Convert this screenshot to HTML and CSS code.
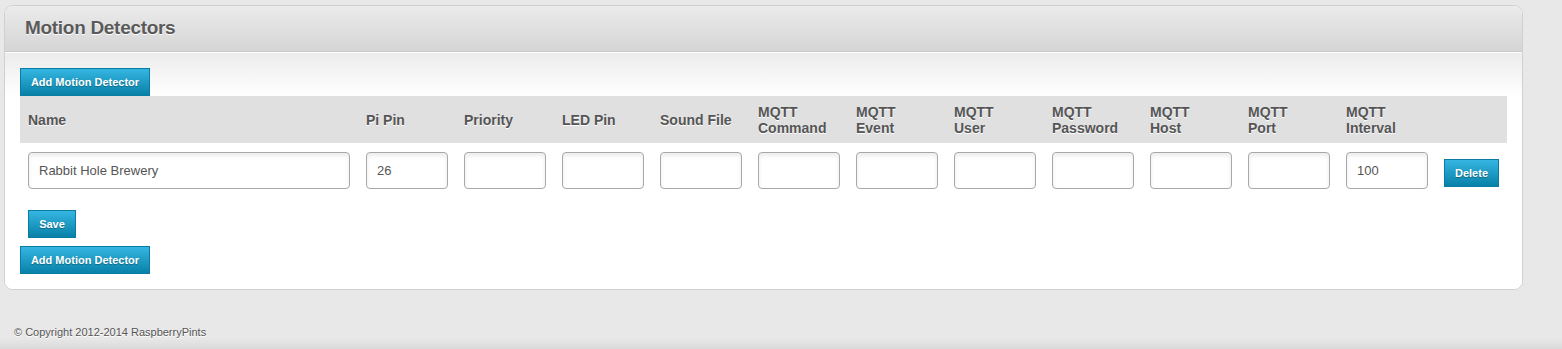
FILE: index.html
```html
<!DOCTYPE html>
<html lang="en">
<head>
    <meta charset="UTF-8">
    <title>Motion Detectors</title>
    <link rel="stylesheet" href="styles.css">
</head>
<body>
    <div class="panel">
        <div class="panel-head">
            <h2>Motion Detectors</h2>
        </div>
        <div class="panel-body">
            <button class="btn btn-add">Add Motion Detector</button>
            <form>
                <table class="grid">
                    <thead>
                        <tr>
                            <th class="col-name">Name</th>
                            <th>Pi Pin</th>
                            <th>Priority</th>
                            <th>LED Pin</th>
                            <th>Sound File</th>
                            <th>MQTT<br>Command</th>
                            <th>MQTT<br>Event</th>
                            <th>MQTT<br>User</th>
                            <th>MQTT<br>Password</th>
                            <th>MQTT<br>Host</th>
                            <th>MQTT<br>Port</th>
                            <th>MQTT<br>Interval</th>
                            <th class="col-del"></th>
                        </tr>
                    </thead>
                    <tbody>
                        <tr>
                            <td class="col-name"><input type="text" class="field field-wide" value="Rabbit Hole Brewery"></td>
                            <td><input type="text" class="field" value="26"></td>
                            <td><input type="text" class="field"></td>
                            <td><input type="text" class="field"></td>
                            <td><input type="text" class="field"></td>
                            <td><input type="text" class="field"></td>
                            <td><input type="text" class="field"></td>
                            <td><input type="text" class="field"></td>
                            <td><input type="text" class="field"></td>
                            <td><input type="text" class="field"></td>
                            <td><input type="text" class="field"></td>
                            <td><input type="text" class="field" value="100"></td>
                            <td class="col-del"><button type="button" class="btn btn-delete">Delete</button></td>
                        </tr>
                    </tbody>
                </table>
                <div class="form-actions">
                    <button type="button" class="btn btn-save">Save</button>
                </div>
            </form>
            <button class="btn btn-add">Add Motion Detector</button>
        </div>
    </div>

    <div class="footer">
        &copy; Copyright 2012-2014 RaspberryPints
    </div>
</body>
</html>
```

FILE: styles.css
```css
body {
    margin: 0;
    background-color: #e8e8e8;
    font-family: 'Liberation Sans', Arial, sans-serif;
    color: #555;
}
.panel {
    width: 1517px;
    margin: 5px 0 0 4px;
    background-color: #fff;
    border: 1px solid #d0d0d0;
    border-radius: 9px;
}
.panel-head {
    height: 45px;
    background: linear-gradient(to bottom, #ebebeb, #d5d5d5);
    border-bottom: 1px solid #c8c8c8;
    border-radius: 8px 8px 0 0;
    padding-left: 20px;
}
.panel-head h2 {
    margin: 0;
    font-size: 19px;
    line-height: 44px;
    font-weight: bold;
    color: #5a5a5a;
    letter-spacing: -0.3px;
    text-shadow: 0 1px 0 #fff;
}
.panel-body {
    background: linear-gradient(to bottom, #ececec 0px, #fff 44px);
    border-top: 1px solid #fff;
    padding: 15px 15px 15px 15px;
    border-radius: 0 0 8px 8px;
}
.btn {
    display: block;
    font-family: 'Liberation Sans', Arial, sans-serif;
    font-weight: bold;
    font-size: 11px;
    color: #fff;
    text-shadow: 0 1px 1px rgba(0, 0, 0, 0.3);
    border: 1px solid #0b7ca1;
    background: linear-gradient(to bottom, #35b6e2, #0881a8);
    padding: 0;
    cursor: pointer;
}
.btn-add {
    width: 130px;
    height: 28px;
}
.grid {
    border-collapse: collapse;
    width: 1487px;
    table-layout: fixed;
}
.grid th {
    width: 82px;
    height: 47px;
    padding: 0 8px;
    background-color: #e0e0e0;
    text-align: left;
    font-size: 14px;
    line-height: 16px;
    font-weight: bold;
    color: #555;
    text-shadow: 0 1px 0 #fff;
    vertical-align: middle;
}
.grid th.col-name {
    width: 322px;
}
.grid th.col-del {
    width: 55px;
}
.grid td {
    padding: 9px 8px 8px;
    vertical-align: top;
}
.field {
    display: block;
    box-sizing: border-box;
    width: 82px;
    height: 37px;
    padding: 0 10px;
    border: 1px solid #a8a8a8;
    border-radius: 4px;
    box-shadow: inset 0 3px 4px rgba(0, 0, 0, 0.08);
    font-family: 'Liberation Sans', Arial, sans-serif;
    font-size: 13px;
    color: #555;
    background-color: #fff;
}
.field-wide {
    width: 322px;
}
.btn-delete {
    width: 55px;
    height: 28px;
    margin-top: 7px;
}
.form-actions {
    padding: 13px 8px 8px;
}
.btn-save {
    width: 48px;
    height: 28px;
}
.footer {
    height: 59px;
    padding: 36px 14px 0;
    box-sizing: border-box;
    font-size: 11px;
    line-height: 12px;
    color: #555;
    text-shadow: 0 1px 0 #fff;
    background: linear-gradient(to bottom, #e8e8e8 0px, #e8e8e8 48px, #dadada 59px);
}
```
